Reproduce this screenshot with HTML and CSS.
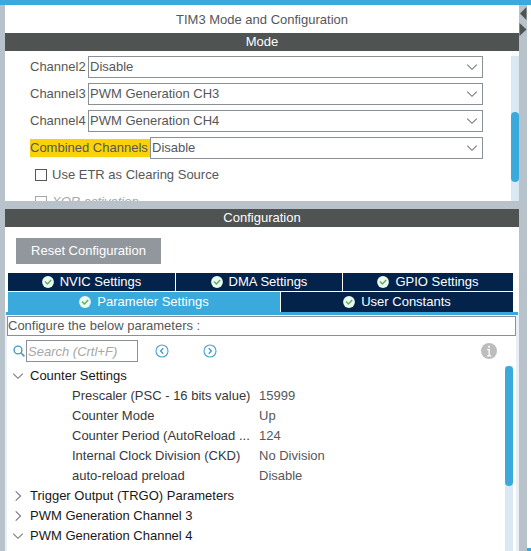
FILE: index.html
```html
<!DOCTYPE html>
<html lang="en">
<head>
<meta charset="utf-8">
<title>TIM3 Mode and Configuration</title>
<link rel="stylesheet" href="styles.css">
</head>
<body>
<svg class="defs" aria-hidden="true">
  <symbol id="down" viewBox="0 0 12 12"><path d="M1.200 3.700 6 8.300 10.800 3.700" fill="none" stroke="currentColor" stroke-width="1.1"/></symbol>
  <symbol id="right" viewBox="0 0 12 12"><path d="M3.700 1.300 8.600 6 3.700 10.700" fill="none" stroke="currentColor" stroke-width="1.1"/></symbol>
  <symbol id="check" viewBox="0 0 12 12"><circle cx="6" cy="6" r="5.9" fill="#eafbf0"/><path d="M3 5.600 5.400 8 9.200 4" fill="none" stroke="#62ad61" stroke-width="1.4"/></symbol>
</svg>
<div class="app">
  <main class="main">
    <h1 class="title">TIM3 Mode and Configuration</h1>
    <section class="mode">
      <h2 class="bar">Mode</h2>
      <div class="mode-body">
        <div class="fields">
          <div class="field">
            <label for="ch2">Channel2</label>
            <div class="pick"><select id="ch2"><option>Disable</option></select><svg class="caret"><use href="#down"/></svg></div>
          </div>
          <div class="field">
            <label for="ch3">Channel3</label>
            <div class="pick"><select id="ch3"><option>PWM Generation CH3</option></select><svg class="caret"><use href="#down"/></svg></div>
          </div>
          <div class="field">
            <label for="ch4">Channel4</label>
            <div class="pick"><select id="ch4"><option>PWM Generation CH4</option></select><svg class="caret"><use href="#down"/></svg></div>
          </div>
          <div class="field warn">
            <label for="comb">Combined Channels</label>
            <div class="pick"><select id="comb"><option>Disable</option></select><svg class="caret"><use href="#down"/></svg></div>
          </div>
          <div class="tick"><input type="checkbox" id="etr"><label for="etr">Use ETR as Clearing Source</label></div>
          <div class="tick off"><input type="checkbox" id="xor" disabled><label for="xor">XOR activation</label></div>
        </div>
        <div class="track"><div class="thumb thumb-mode"></div></div>
      </div>
    </section>
    <section class="config">
      <h2 class="bar">Configuration</h2>
      <div class="actions"><button class="reset" type="button">Reset Configuration</button></div>
      <div class="tabs">
        <div class="tab-row three">
          <button class="tab" type="button"><svg class="ok"><use href="#check"/></svg>NVIC Settings</button>
          <button class="tab" type="button"><svg class="ok"><use href="#check"/></svg>DMA Settings</button>
          <button class="tab" type="button"><svg class="ok"><use href="#check"/></svg>GPIO Settings</button>
        </div>
        <div class="tab-row two">
          <button class="tab active" type="button"><svg class="ok"><use href="#check"/></svg>Parameter Settings</button>
          <button class="tab" type="button"><svg class="ok"><use href="#check"/></svg>User Constants</button>
        </div>
      </div>
      <div class="pane">
        <p class="hint">Configure the below parameters :</p>
        <div class="search">
          <svg class="lens" viewBox="0 0 12 12"><circle cx="5" cy="5" r="3.9" fill="none" stroke="#4598c4" stroke-width="1.4"/><path d="M7.8 7.8 11.4 11.4" stroke="#4598c4" stroke-width="1.6"/></svg>
          <input type="text" aria-label="Search" placeholder="Search (Crtl+F)">
          <button class="round" type="button" aria-label="Previous"><svg viewBox="0 0 14 14"><circle cx="7" cy="7" r="6" fill="none" stroke="#4fa3cb" stroke-width="1.1"/><path d="M8.3 4.3 5.6 7 8.3 9.7" fill="none" stroke="#4598c4" stroke-width="1.3"/></svg></button>
          <button class="round" type="button" aria-label="Next"><svg viewBox="0 0 14 14"><circle cx="7" cy="7" r="6" fill="none" stroke="#4fa3cb" stroke-width="1.1"/><path d="M5.7 4.3 8.4 7 5.7 9.7" fill="none" stroke="#4598c4" stroke-width="1.3"/></svg></button>
          <button class="info" type="button" aria-label="Information"><svg viewBox="0 0 16 16"><circle cx="8" cy="8" r="8" fill="#bdbdbd"/><path d="M6.200 6.600H8.200V12.600M6.200 12.800H10.200" fill="none" stroke="#fff" stroke-width="1.3"/><circle cx="8" cy="3.800" r="1" fill="#fff"/></svg></button>
        </div>
        <div class="params">
          <div class="tree">
            <button class="group" type="button"><svg><use href="#down"/></svg>Counter Settings</button>
            <table>
              <tr><th scope="row">Prescaler (PSC - 16 bits value)</th><td>15999</td></tr>
              <tr><th scope="row">Counter Mode</th><td>Up</td></tr>
              <tr><th scope="row">Counter Period (AutoReload ...</th><td>124</td></tr>
              <tr><th scope="row">Internal Clock Division (CKD)</th><td>No Division</td></tr>
              <tr><th scope="row">auto-reload preload</th><td>Disable</td></tr>
            </table>
            <button class="group" type="button"><svg><use href="#right"/></svg>Trigger Output (TRGO) Parameters</button>
            <button class="group" type="button"><svg><use href="#right"/></svg>PWM Generation Channel 3</button>
            <button class="group" type="button"><svg><use href="#down"/></svg>PWM Generation Channel 4</button>
          </div>
          <div class="track"><div class="thumb thumb-params"></div></div>
        </div>
      </div>
    </section>
  </main>
  <div class="divider">
    <svg viewBox="0 0 8 32"><path d="M7.500 2V15L1 8.500Z M.5 18V31L7.500 24.500Z" fill="#4f5352"/></svg>
  </div>
  <div class="next"></div>
</div>
</body>
</html>
```
FILE: styles.css
```css
* { box-sizing: border-box; }

body {
  margin: 0;
  background: #fff;
  color: #55575a;
  font: 13px/18px "Liberation Sans", Arial, sans-serif;
}

h1, h2, p { margin: 0; font-size: 13px; font-weight: 400; }

button, input, select { font: inherit; color: inherit; border-radius: 0; }

button { border: 0; padding: 0; background: none; }

svg { display: block; flex: none; }

.defs { position: absolute; width: 0; height: 0; }

.app {
  display: flex;
  height: 100vh;
  border-top: 5px solid #3aa9dc;
  overflow: hidden;
}

.main {
  flex: 1;
  min-width: 0;
  display: flex;
  flex-direction: column;
  border-left: 5px solid #b7c2ca;
}

.title { line-height: 30px; height: 28px; text-align: center; }

.bar {
  background: #4f5352;
  color: #fff;
  text-align: center;
}

.mode { border-bottom: 8px solid #b7c2ca; }

.mode-body {
  display: flex;
  height: 150px;
  padding-top: 5px;
  overflow: hidden;
}

.fields {
  flex: 1;
  display: flex;
  flex-direction: column;
  gap: 5px;
  padding: 0 28px 0 25px;
}

.field { display: flex; align-items: center; }

.field label { flex: none; width: 58px; }

.warn label { width: 120px; background: #fad20a; }

.pick { position: relative; flex: 1; }

select {
  display: block;
  width: 100%;
  height: 22px;
  padding: 0 24px 0 1px;
  border: 1px solid #8b8f96;
  background: #fff;
  appearance: none;
}

.caret {
  position: absolute;
  top: 5px;
  right: 5px;
  width: 12px;
  height: 12px;
  color: #77797c;
  pointer-events: none;
}

.tick {
  flex: none;
  display: flex;
  align-items: center;
  gap: 5px;
  height: 22px;
  padding-left: 5px;
}

.tick input {
  width: 12px;
  height: 12px;
  margin: 0;
  border: 1px solid #55575a;
  background: #fff;
  appearance: none;
}

.off { color: #a5a7aa; font-style: italic; }

.off input { border-color: #a5a7aa; }

.track { flex: none; width: 8px; background: #d9e8f3; }

.thumb { border-radius: 4px; background: #3aa9dc; }

.thumb-mode { height: 70px; margin-top: 56px; }

.thumb-params { height: 120px; }

.config {
  flex: 1;
  min-height: 0;
  display: flex;
  flex-direction: column;
}

.actions { padding: 11px 11px 9px; }

.reset {
  width: 145px;
  height: 26px;
  background: #91979d;
  color: #fff;
}

.tabs {
  display: flex;
  flex-direction: column;
  gap: 1px;
  padding: 0 6px 0 3px;
}

.tab-row { display: grid; gap: 1px; }

.three { grid-template-columns: 167fr 166fr 170fr; }

.two { grid-template-columns: 272fr 232fr; }

.tab {
  display: flex;
  align-items: center;
  justify-content: center;
  gap: 6px;
  height: 18px;
  background: #03234b;
  color: #fff;
}

.two .tab { height: 20px; }

.tab.active { background: #3aa9dc; }

.ok { width: 12px; height: 12px; }

.pane {
  flex: 1;
  min-height: 0;
  display: flex;
  flex-direction: column;
  border: solid #e9eff4;
  border-width: 0 3px 0 2px;
}

.pane::before {
  content: "";
  height: 3px;
  margin: 0 -2px 1px -1px;
  background: #3aa9dc;
}

.hint {
  border: 1px solid #8b8f96;
}

.search {
  display: flex;
  align-items: center;
  padding: 4px 19px 4px 6px;
}

.lens { width: 12px; height: 12px; margin-right: 1px; }

.search input {
  width: 112px;
  height: 22px;
  padding: 0 1px;
  border: 1px solid #8b8f96;
}

.search input::placeholder { color: #a5a7aa; font-style: italic; opacity: 1; }

.round { width: 14px; height: 14px; margin-left: 17px; }

.round + .round { margin-left: 34px; }

.info { width: 16px; height: 16px; margin-left: auto; }

.params {
  flex: 1;
  min-height: 0;
  display: flex;
  padding-right: 3px;
}

.tree { flex: 1; min-width: 0; }

.group {
  display: flex;
  align-items: center;
  gap: 6px;
  width: 100%;
  height: 20px;
  padding-left: 5px;
  color: #17181a;
}

.group svg { width: 12px; height: 12px; color: #77797c; }

table {
  width: 100%;
  border-spacing: 0;
  table-layout: fixed;
}

th, td {
  height: 20px;
  padding: 0;
  line-height: 20px;
  font-weight: 400;
  text-align: left;
  white-space: nowrap;
}

th { width: 252px; padding-left: 65px; color: #36383b; }

.divider { width: 8px; background: #b7c2ca; }

.divider svg { width: 8px; height: 32px; }

.next { width: 4px; border-bottom: 3px solid #3aa9dc; }
```
